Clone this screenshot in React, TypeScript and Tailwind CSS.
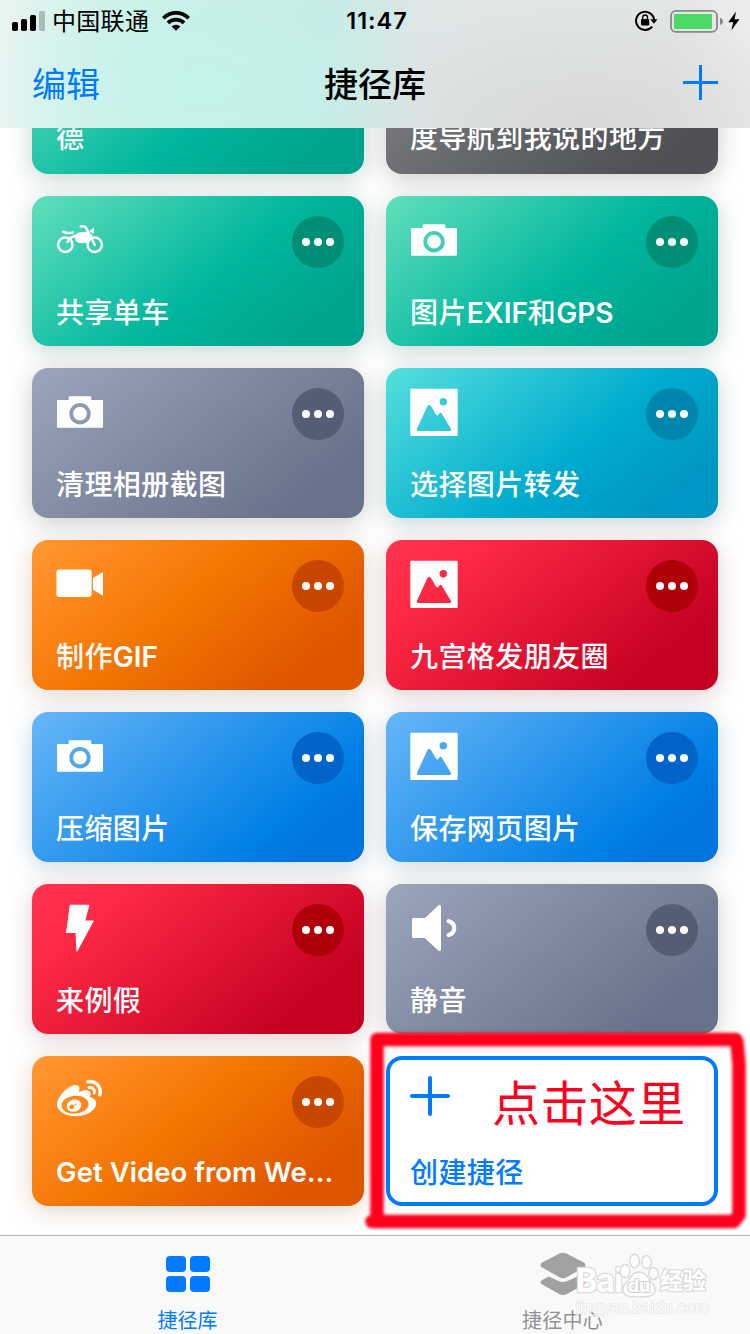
import React from 'react';
import { FaWeibo } from 'react-icons/fa';

type Tone = 'teal' | 'graphite' | 'slate' | 'cyan' | 'orange' | 'red' | 'blue';

const tones: Record<Tone, { card: string; dots: string }> = {
  teal: {
    card: 'bg-[linear-gradient(140deg,#61dfbc_0%,#00b69d_55%,#00a390_86%)] shadow-[0_5px_24px_rgba(20,80,72,0.24)]',
    dots: 'bg-[#008e76]',
  },
  graphite: {
    card: 'bg-[linear-gradient(140deg,#86868c_0%,#5c5f63_60%,#505156_84%)] shadow-[0_5px_24px_rgba(50,40,30,0.24)]',
    dots: 'bg-[#404146]',
  },
  slate: {
    card: 'bg-[linear-gradient(140deg,#9ba5bb_0%,#7d869d_50%,#68728a_84%)] shadow-[0_5px_24px_rgba(50,50,40,0.24)]',
    dots: 'bg-[#545d74]',
  },
  cyan: {
    card: 'bg-[linear-gradient(140deg,#55dfdc_0%,#00abce_57%,#0096c3_86%)] shadow-[0_5px_24px_rgba(20,70,90,0.24)]',
    dots: 'bg-[#0085ac]',
  },
  orange: {
    card: 'bg-[linear-gradient(140deg,#ff9833_0%,#ff8a20_17%,#f27400_47%,#df5500_83%)] shadow-[0_5px_24px_rgba(120,70,30,0.22)]',
    dots: 'bg-[#c94600]',
  },
  red: {
    card: 'bg-[linear-gradient(140deg,#ff344f_0%,#ff2a46_18%,#c40021_83%)] shadow-[0_5px_24px_rgba(120,30,45,0.22)]',
    dots: 'bg-[#af0009]',
  },
  blue: {
    card: 'bg-[linear-gradient(140deg,#68b6f7_0%,#007fe5_74%,#0074df_86%)] shadow-[0_5px_24px_rgba(20,70,110,0.22)]',
    dots: 'bg-[#0064c8]',
  },
};

const Glyph = ({ children }: { children: React.ReactNode }) => (
  <svg viewBox="0 0 48 48" className="size-12 text-white" fill="currentColor">
    {children}
  </svg>
);

const Motorcycle = () => (
  <Glyph>
    <g fill="none" stroke="currentColor" strokeWidth="2.5" strokeLinecap="round">
      <circle cx="9.3" cy="28.700" r="7.200" />
      <circle cx="38.7" cy="28.700" r="7.200" />
      <path d="M7.200 15.900c3 1.800 6.500 1.300 9.800 .6" strokeWidth="2.600" />
      <path d="M11.600 26c1.500-3.800 4-5.600 9-6.300" />
      <path d="M24.800 10.600h3.200c1.200 0 1.600 .5 2.200 1.600L38.800 29" strokeWidth="2.500" />
      <path d="M30.800 27.200c.2-4 2-6.500 5-8" strokeWidth="2" />
    </g>
    <path d="M18.500 20c2-2.800 4-3.700 7.500-3.900l6.500-.3 2.500 4.300-3.200 5.200c-3.500 2.500-8.500 2.400-11.300 .2-1.500-1.200-1.400-3-2-5.500z" />
    <path d="M33.400 15 38 11.600v5.800l-2.500-.7z" />
  </Glyph>
);

const Camera = () => (
  <Glyph>
    <path
      fillRule="evenodd"
      d="M13.900 8.300h20.200c.8 0 1.200.5 1.200 1.200V12h10.400c.8 0 1.300.5 1.300 1.300v25.100c0 .8-.5 1.300-1.300 1.300H2.300c-.8 0-1.300-.5-1.300-1.300V13.300c0-.8.5-1.300 1.300-1.300h10.400V9.500c0-.7.5-1.200 1.200-1.200zM24 15a10.700 10.700 0 1 0 0 21.400A10.700 10.700 0 0 0 24 15z"
    />
    <circle cx="24" cy="25.700" r="6.900" />
  </Glyph>
);

const Picture = () => (
  <Glyph>
    <path
      fillRule="evenodd"
      d="M1.600 .8h44.800c.8 0 1.300.5 1.300 1.300v44.600c0 .8-.5 1.300-1.300 1.300H1.600c-.8 0-1.300-.5-1.300-1.300V2.100c0-.8.500-1.300 1.300-1.300zM17.300 18.300 7.100 40.500c-.7 1.600.1 2.600 1.500 2.600h30.700c1.600 0 2.200-1.300 1.400-2.700l-9-15c-.6-.9-1.400-.9-2.100-.1l-1.400 1.700c-.8.8-1.400.7-2-.2l-5.100-8.500c-1-1.500-2.900-1.700-3.800 0zM33.300 10a3.700 3.700 0 1 0 0 7.400 3.700 3.700 0 0 0 0-7.400z"
    />
  </Glyph>
);

const Video = () => (
  <Glyph>
    <rect x=".4" y="9.500" width="35.300" height="27.500" rx="3.200" />
    <path d="M37 17.900 47 12v23.800l-10-6z" />
  </Glyph>
);

const Bolt = () => (
  <Glyph>
    <path
      d="M14.300 1.300h18.400L28.500 17h8.600L20.900 47l-.7-18.500H10.700z"
      stroke="currentColor"
      strokeWidth="1.200"
      strokeLinejoin="round"
    />
  </Glyph>
);

const Speaker = () => (
  <Glyph>
    <path
      d="M3.500 15.500h12L29.500 2.400v43.200L15.500 32.600h-12z"
      stroke="currentColor"
      strokeWidth="3"
      strokeLinejoin="round"
    />
    <path d="M38.700 17.200c7.400 2 7.400 11.800 0 13.800" fill="none" stroke="currentColor" strokeWidth="4.200" strokeLinecap="round" />
  </Glyph>
);

const Weibo = () => (
  <div className="flex h-12 w-12 pt-px pl-px text-white">
    <FaWeibo size={45} />
  </div>
);

type Shortcut = { title: React.ReactNode; tone: Tone; icon: () => React.JSX.Element };

const Latin = ({ children }: { children: string }) => (
  <span className="font-semibold tracking-[-0.08px]">{children}</span>
);

const shortcuts: Shortcut[] = [
  { title: '共享单车', tone: 'teal', icon: Motorcycle },
  {
    title: (
      <>
        图片<Latin>EXIF</Latin>和<Latin>GPS</Latin>
      </>
    ),
    tone: 'teal',
    icon: Camera,
  },
  { title: '清理相册截图', tone: 'slate', icon: Camera },
  { title: '选择图片转发', tone: 'cyan', icon: Picture },
  {
    title: (
      <>
        制作<Latin>GIF</Latin>
      </>
    ),
    tone: 'orange',
    icon: Video,
  },
  { title: '九宫格发朋友圈', tone: 'red', icon: Picture },
  { title: '压缩图片', tone: 'blue', icon: Camera },
  { title: '保存网页图片', tone: 'blue', icon: Picture },
  { title: '来例假', tone: 'red', icon: Bolt },
  { title: '静音', tone: 'slate', icon: Speaker },
  {
    title: <span className="block pb-px text-[27.5px] leading-[31px] font-semibold tracking-[0.04px]">Get Video from We...</span>,
    tone: 'orange',
    icon: Weibo,
  },
];

const labelClass = 'whitespace-nowrap text-[28px] leading-8 font-medium tracking-[0.42px]';

const ShortcutCard = ({ title, tone, icon: Icon }: Shortcut) => (
  <div className={`flex h-[150px] flex-col justify-between rounded-2xl pt-5 pr-5 pb-[17px] pl-6 ${tones[tone].card}`}>
    <div className="flex items-start justify-between">
      <Icon />
      <div className={`flex size-[52px] items-center justify-center gap-1 rounded-full ${tones[tone].dots}`}>
        <span className="size-2 rounded-full bg-white" />
        <span className="size-2 rounded-full bg-white" />
        <span className="size-2 rounded-full bg-white" />
      </div>
    </div>
    <div className={`${labelClass} text-white`}>{title}</div>
  </div>
);

const PartialCard = ({ title, tone }: { title: string; tone: Tone }) => (
  <div className={`flex h-[150px] flex-col justify-end rounded-2xl pb-[20px] pl-6 ${tones[tone].card}`}>
    <div className={`${labelClass} text-white`}>{title}</div>
  </div>
);

const CreateCard = () => (
  <div className="relative flex h-[150px] flex-col justify-between rounded-2xl border-4 border-[#007aff] bg-white pt-4 pb-[13px] pl-5 text-[#007aff]">
    <svg viewBox="0 0 40 40" className="size-10" stroke="currentColor" strokeWidth="4" strokeLinecap="round">
      <path d="M20 2v36M2 20h36" />
    </svg>
    <div className={labelClass}>创建捷径</div>
    <div className="absolute top-4 left-[102px] text-[48px] leading-[56px] tracking-[0.4px] whitespace-nowrap text-[#ff001e]">
      点击这里
    </div>
    <svg
      viewBox="0 0 390 220"
      className="pointer-events-none absolute -top-10 -left-[30px] h-[220px] w-[390px] max-w-none overflow-visible blur-[1.8px]"
      fill="none"
      stroke="#ff001c"
      strokeWidth="13.500"
      strokeLinecap="round"
      strokeLinejoin="round"
    >
      <path d="M17 19.500H376M377 22 379 45V195L374 201M379 195 374 201.500H12M17 199V21" />
    </svg>
  </div>
);

const StatusBar = () => (
  <div className="grid h-10 grid-cols-[1fr_auto_1fr] items-center pr-[10px] pl-3">
    <div className="flex items-center">
      <svg viewBox="0 0 33 20" className="h-5 w-[33px]">
        <rect x="0" y="11" width="6" height="9" rx="1.800" />
        <rect x="9" y="8" width="6" height="12" rx="1.800" />
        <rect x="18" y="4" width="6" height="16" rx="1.800" />
        <rect x="27" y="0" width="6" height="20" rx="1.800" fill="#a9bcb8" />
      </svg>
      <span className="ml-[7px] pt-0.5 text-[24px] leading-10 tracking-[0.3px]">中国联通</span>
      <svg viewBox="0 0 28 20" className="ml-[13px] h-5 w-7" fill="none" stroke="#000" strokeWidth="3.700">
        <path d="M1.300 7.200a18 18 0 0 1 25.400 0" />
        <path d="M5.900 11.900a11.500 11.500 0 0 1 16.200 0" />
        <path d="M14 19.800 9.600 15.600a6.300 6.300 0 0 1 8.800 0z" fill="#000" stroke="none" />
      </svg>
    </div>
    <div className="pl-0.5 text-[23.500px] font-semibold tracking-[1px]">11:47</div>
    <div className="flex items-center justify-end">
      <svg viewBox="0 0 23 21" className="mb-px h-[21px] w-[23px]">
        <path d="M17.200 16.600A9.100 9.100 0 1 1 19.200 9.800" fill="none" stroke="#000" strokeWidth="2" />
        <path d="M15.300 9.300h7.200l-3.600 4.400z" />
        <rect x="6" y="9" width="8.200" height="6.400" rx=".8" />
        <path d="M7.700 9.500V7.400a2.400 2.400 0 0 1 4.800 0v2.100" fill="none" stroke="#000" strokeWidth="1.300" />
      </svg>
      <svg viewBox="0 0 54 24" className="ml-3 h-6 w-[54px]">
        <rect x="1" y="1.900" width="46" height="21" rx="5" fill="none" stroke="#868889" strokeWidth="1.800" />
        <rect x="4" y="5" width="38" height="15" rx="1" fill="#4cd964" />
        <path d="M50 8.700c4 1.400 4 6 0 7.400z" fill="#868889" />
      </svg>
      <svg viewBox="0 0 12 20" className="ml-[4px] h-5 w-3">
        <path d="M8 .6 .3 11.200h4.900L3.300 19.400 11.500 8.300H6.600z" />
      </svg>
    </div>
  </div>
);

const headerBg =
  'bg-[radial-gradient(ellipse_220px_130px_at_205px_85px,rgba(194,243,236,0.9),rgba(196,240,233,0)_100%),radial-gradient(ellipse_270px_130px_at_590px_128px,rgba(214,214,216,0.9),rgba(216,216,217,0)_100%),linear-gradient(90deg,#e9f4f2_0px,#d6f2eb_80px,#c9efe8_180px,#c7ebe6_320px,#d3e8e6_375px,#dfe6e6_430px,#e1e5e5_560px,#e3e5e5_670px,#ececeb_750px)]';

export default function App() {
  return (
    <div className="flex h-[1334px] w-[750px] flex-col overflow-hidden bg-white font-['Inter','Noto_Sans_CJK_SC',sans-serif] text-black">
      <header className={`z-10 h-32 shrink-0 ${headerBg}`}>
        <StatusBar />
        <div className="grid h-[88px] grid-cols-[1fr_auto_1fr] items-center px-8">
          <span className="pt-0.5 text-[34px] leading-[44px] text-[#007aff]">编辑</span>
          <h1 className="pt-0.5 text-[34px] leading-[44px] font-medium">捷径库</h1>
          <svg viewBox="0 0 35 35" className="mb-[3px] size-[35px] justify-self-end" stroke="#007aff" strokeWidth="3">
            <path d="M17.500 0v35M0 17.500h35" />
          </svg>
        </div>
      </header>

      <main className="flex h-[1107px] shrink-0 flex-col justify-end overflow-hidden px-8 pb-[29px]">
        <div className="grid grid-cols-2 gap-[22px]">
          <PartialCard title="德" tone="teal" />
          <PartialCard title="度导航到我说的地方" tone="graphite" />
          {shortcuts.map((s, i) => (
            <ShortcutCard key={i} {...s} />
          ))}
          <CreateCard />
        </div>
      </main>

      <nav className="relative grid h-[99px] shrink-0 grid-cols-2 border-t border-[#b0b0b0] bg-[#f9f9f9] text-[20px]">
        <div className="flex flex-col items-center pt-5 text-[#007aff]">
          <div className="grid grid-cols-2 gap-1">
            <span className="h-4 w-5 rounded bg-[#007aff]" />
            <span className="h-4 w-5 rounded bg-[#007aff]" />
            <span className="h-4 w-5 rounded bg-[#007aff]" />
            <span className="h-4 w-5 rounded bg-[#007aff]" />
          </div>
          <span className="mt-[17px] leading-6">捷径库</span>
        </div>
        <div className="flex flex-col items-center pt-4 text-[#929292]">
          <svg viewBox="0 0 46 44" className="h-11 w-[46px]" fill="#a1a1a1">
            <path d="M19.500 1.600c2.300-1.100 4.700-1.100 7 0L43.800 10.400c2.200 1.400 2.200 3.800 0 5.200L26.500 25.300c-2.300 1.200-4.700 1.200-7 0L2.200 15.600C0 14.200 0 11.800 2.200 10.400z" />
            <path d="M8.600 24.600 18.500 29c3.200 1.300 5.800 1.300 9 0l9.900-4.400 6.400 3.300c2.200 1.300 2.200 3.200 0 4.500L26.500 42.300c-2.300 1.100-4.700 1.100-7 0L2.200 32.400c-2.200-1.300-2.200-3.200 0-4.500z" />
          </svg>
          <span className="mt-[13px] leading-6 tracking-[0.300px]">捷径中心</span>
        </div>

        <div className="absolute top-4 left-[576px] flex flex-col text-white">
          <div className="flex h-[46px] items-end">
            <span className="text-[32px] leading-[34px] font-bold tracking-[-0.800px] [-webkit-text-stroke:2.500px_#dcdcdc] [paint-order:stroke_fill]">
              Bai
            </span>
            <svg viewBox="0 0 40 45" className="-ml-[3px] h-[45px] w-10" fill="#fdfdfd" stroke="#dadada" strokeWidth="1.400">
              <ellipse cx="6" cy="18" rx="4.800" ry="6.500" />
              <ellipse cx="15.500" cy="8" rx="4.800" ry="6.800" />
              <ellipse cx="27.500" cy="9" rx="4.800" ry="6.500" />
              <ellipse cx="34.500" cy="20.500" rx="4.500" ry="6" />
              <path d="M20 19c7 0 8 6 13 11s4 13-4 13.500c-4 .3-14 .3-18 0-8-.5-9-8.500-4-13.500s6-11 13-11z" />
              <text x="20" y="39" textAnchor="middle" fontSize="18" fontWeight="700" fill="#fff" stroke="#d2d2d2" strokeWidth="2.200" paintOrder="stroke">
                du
              </text>
            </svg>
            <span className="ml-px text-[23px] leading-[34px] font-bold [-webkit-text-stroke:2.500px_#dcdcdc] [paint-order:stroke_fill]">
              经验
            </span>
          </div>
          <span className="text-[15.500px] leading-[19px] tracking-[-0.100px] opacity-70 [-webkit-text-stroke:1.500px_#dedede] [paint-order:stroke_fill]">
            jingyan.baidu.com
          </span>
        </div>
      </nav>
    </div>
  );
}
